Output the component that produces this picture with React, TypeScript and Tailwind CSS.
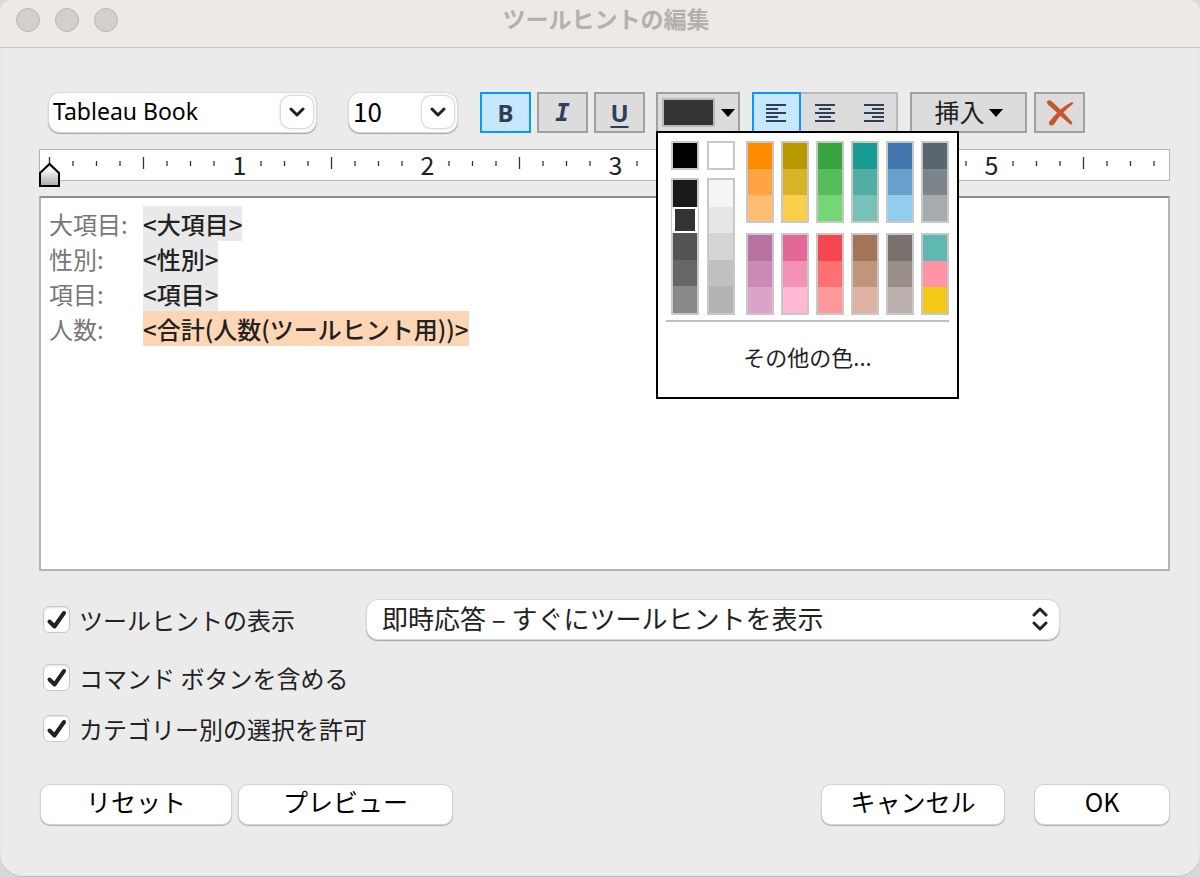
// Tooltip editor dialog: formatting toolbar, ruler, rich text area and options.

import { useState, type ReactNode } from "react";

type Align = "left" | "center" | "right";

const FONT = "font-['Noto_Sans_CJK_JP',sans-serif]";
const PUSH_BUTTON =
  "h-[41px] rounded-[10px] border border-[#d2d2d2] bg-white pb-2 text-[25px] leading-8 text-black shadow-[0_1px_1px_rgba(0,0,0,0.25)]";
const TOOL_BUTTON = "flex h-[41px] items-center justify-center border-2";
const TOOL_OFF = "border-[#a0a0a3] bg-[#dcdcdc]";
const TOOL_ON = "border-[#0a95ff] bg-[#c7e6ff]";

// Two neutral columns, then the hue ramps (two rows of six)
const DARKS = ["#1b191a", "#333333", "#545454", "#666666", "#898989"];
const LIGHTS = ["#f5f5f5", "#e6e6e6", "#d4d4d4", "#c0c0c0", "#b4b4b2"];
const HUES = [
  ["#ff8b00", "#ffa442", "#ffbe73"],
  ["#b89900", "#d7b328", "#f9cf4b"],
  ["#37a43f", "#56bd5b", "#75d675"],
  ["#1a9b94", "#52aea4", "#79c1b8"],
  ["#4276ae", "#68a1cb", "#92ccee"],
  ["#59666f", "#7c858c", "#a6abad"],
  ["#b973a3", "#cb8bb6", "#dba3ca"],
  ["#e26997", "#f492b5", "#ffb9d4"],
  ["#f4464f", "#ff7074", "#ff989b"],
  ["#a3735a", "#bf957c", "#dfb3a3"],
  ["#7a706e", "#9a8e89", "#bcb1ae"],
  ["#5fb9b2", "#ff94a5", "#f4c915"],
];

const FIELDS = [
  { label: "大項目:", value: "<大項目>" },
  { label: "性別:", value: "<性別>" },
  { label: "項目:", value: "<項目>" },
  { label: "人数:", value: "<合計(人数(ツールヒント用))>", measure: true },
];

function Swatches({ colors, selected, onPick }: { colors: string[]; selected: string; onPick: (c: string) => void }) {
  return (
    <div className="flex w-7 flex-col border-2 border-[#c8c8c8]">
      {colors.map((c) => (
        <button
          key={c}
          aria-label={c}
          onClick={() => onPick(c)}
          className={`min-h-[25px] flex-1 ${c === selected ? "relative shadow-[inset_0_0_0_2px_#fff,1px_0_#fff,-1px_0_#fff]" : ""}`}
          style={{ backgroundColor: c }}
        />
      ))}
    </div>
  );
}

function Combo({ label, options, className, textClass }: { label: string; options: string[]; className: string; textClass: string }) {
  return (
    <div className={`relative ${className}`}>
      <select
        aria-label={label}
        className={`h-[41px] w-full appearance-none rounded-[12px] border border-[#d8d8d8] bg-white pl-1 text-black shadow-[0_1px_1px_rgba(0,0,0,0.3)] ${textClass}`}
      >
        {options.map((o) => (
          <option key={o}>{o}</option>
        ))}
      </select>
      <span className="pointer-events-none absolute top-1 right-1 flex h-8 w-8 items-center justify-center rounded-[9px] bg-white shadow-[0_0_3px_rgba(0,0,0,0.4)]">
        <svg width="16" height="10" viewBox="0 0 16 10" fill="none" stroke="#222" strokeWidth="3" strokeLinecap="round" strokeLinejoin="round">
          <path d="M2 2l6 6 6-6" />
        </svg>
      </span>
    </div>
  );
}

function AlignIcon({ align }: { align: Align }) {
  const shift = { left: 0, center: 4, right: 8 }[align];
  return (
    <svg width="20" height="20" viewBox="0 0 20 20" stroke="#2e3f57" strokeWidth="2">
      {[2, 6, 10, 14, 18].map((y, i) =>
        i % 2 === 0 ? <path key={y} d={`M0 ${y}h20`} /> : <path key={y} d={`M${shift} ${y}h12`} />
      )}
    </svg>
  );
}

function Caret() {
  return (
    <svg width="14" height="8" viewBox="0 0 14 8">
      <path d="M0 0h14L7 8z" fill="#000" />
    </svg>
  );
}

function Ruler() {
  const ticks = Array.from({ length: 48 }, (_, i) => i);
  return (
    <div className="relative mt-4 h-8 border border-[#b4b4b4] bg-white">
      <svg width="100%" height="30" className="block overflow-visible">
        {ticks.map((i) => {
          const x = 9.5 + i * 23.5;
          if (i > 0 && i % 8 === 0) {
            return (
              <text key={i} x={x + 2} y="25" textAnchor="middle" fontSize="25" fill="#222">
                {i / 8}
              </text>
            );
          }
          const half = i % 4 === 0;
          return <path key={i} d={half ? `M${x} 7v12` : `M${x} 11v5`} stroke="#333" strokeWidth="1.3" />;
        })}
      </svg>
      <svg width="22" height="26" viewBox="0 0 22 26" className="absolute top-3 -left-px">
        <defs>
          <linearGradient id="marker" x1="0" y1="0" x2="0" y2="1">
            <stop offset="0.3" stopColor="#f4f4f4" />
            <stop offset="1" stopColor="#a8a8a8" />
          </linearGradient>
        </defs>
        <path d="M1 24V11L10.500 2 20 11v13z" fill="url(#marker)" stroke="#000" strokeWidth="2" />
      </svg>
    </div>
  );
}

function Check({ children }: { children: ReactNode }) {
  return (
    <label className="flex h-[27px] items-center gap-[9px] text-[24px] leading-[27px] whitespace-nowrap text-[#222]">
      <span className="relative block h-[27px] w-[27px]">
        <input
          type="checkbox"
          defaultChecked
          className="peer block h-full w-full appearance-none rounded-[6px] border border-[#c9c9c9] bg-white shadow-[inset_0_1px_2px_rgba(0,0,0,0.12)]"
        />
        <svg
          viewBox="0 0 27 27"
          className="pointer-events-none absolute inset-0 hidden peer-checked:block"
          fill="none"
          stroke="#222"
          strokeWidth="4"
          strokeLinecap="round"
          strokeLinejoin="round"
        >
          <path d="M6.500 15.500l5 5L21 7" />
        </svg>
      </span>
      {children}
    </label>
  );
}

export default function App() {
  const [bold, setBold] = useState(true);
  const [italic, setItalic] = useState(false);
  const [underline, setUnderline] = useState(false);
  const [align, setAlign] = useState<Align>("left");
  const [color, setColor] = useState("#333333");
  const [paletteOpen, setPaletteOpen] = useState(true);

  return (
    <div className="bg-[#d9d9d9]">
      <main className={`${FONT} overflow-hidden rounded-t-[12px] rounded-b-[22px] bg-[#ebebeb] text-[#222] shadow-[inset_0_-1px_1px_#bbb]`}>
        {/* Title bar */}
        <header className="relative flex h-12 items-start justify-center border-b border-[#c6c2bf] bg-[#eee9e4] pl-3">
          <div className="absolute top-2 left-4 flex gap-[15px]">
            {["閉じる", "しまう", "拡大"].map((name) => (
              <button key={name} aria-label={name} className="h-6 w-6 rounded-full border border-[#b9b5b2] bg-[#d4cfcb]" />
            ))}
          </div>
          <h1 className="text-[23px] leading-9 font-bold text-[#b4b0ad]">ツールヒントの編集</h1>
        </header>

        <div className="pt-11 pr-[30px] pb-[52px] pl-[39px]">
          {/* Toolbar */}
          <div className="flex pl-[9px]">
            <Combo label="フォント" options={["Tableau Book"]} className="w-[269px]" textClass="pb-0.5 text-[23px] font-['Noto_Sans',sans-serif]" />
            <Combo label="サイズ" options={["10"]} className="ml-[31px] w-[110px]" textClass="pb-1 text-[26px] leading-[30px]" />

            <div className="ml-[22px] flex gap-1.5 text-[#2e3f57]">
              <button aria-label="太字" aria-pressed={bold} onClick={() => setBold(!bold)} className={`${TOOL_BUTTON} w-[51px] ${bold ? TOOL_ON : TOOL_OFF}`}>
                <span className="font-['Noto_Sans',sans-serif] text-[24px] leading-8 font-bold">B</span>
              </button>
              <button aria-label="斜体" aria-pressed={italic} onClick={() => setItalic(!italic)} className={`${TOOL_BUTTON} w-[51px] ${italic ? TOOL_ON : TOOL_OFF}`}>
                <span className="font-['DejaVu_Sans_Mono',monospace] text-[24px] leading-8 font-bold italic">I</span>
              </button>
              <button aria-label="下線" aria-pressed={underline} onClick={() => setUnderline(!underline)} className={`${TOOL_BUTTON} w-[51px] ${underline ? TOOL_ON : TOOL_OFF}`}>
                <span className="font-['Noto_Sans',sans-serif] text-[24px] leading-8 font-bold underline decoration-2 underline-offset-4">U</span>
              </button>
            </div>

            {/* Text colour and its palette */}
            <div className="relative ml-[11px]">
              <button aria-label="色" aria-expanded={paletteOpen} onClick={() => setPaletteOpen(!paletteOpen)} className={`${TOOL_BUTTON} w-[84px] gap-1.5 ${TOOL_OFF}`}>
                <span className="h-[29px] w-[53px] border-2 border-[#b9b9b9]" style={{ backgroundColor: color }} />
                <Caret />
              </button>
              {paletteOpen && (
                <div className="absolute top-[39px] left-0 z-10 h-[268px] w-[303px] border-2 border-black bg-white px-2 pt-2">
                  <div className="flex gap-[11px] pl-[5px]">
                    <div className="flex gap-2">
                      <div className="flex flex-col gap-2">
                        <Swatches colors={["#000000"]} selected={color} onPick={setColor} />
                        <div className="flex h-[137px]">
                          <Swatches colors={DARKS} selected={color} onPick={setColor} />
                        </div>
                      </div>
                      <div className="flex flex-col gap-2">
                        <Swatches colors={["#ffffff"]} selected={color} onPick={setColor} />
                        <div className="flex h-[137px]">
                          <Swatches colors={LIGHTS} selected={color} onPick={setColor} />
                        </div>
                      </div>
                    </div>
                    <div className="grid auto-rows-[82px] grid-cols-[repeat(6,28px)] gap-x-[7px] gap-y-2.5">
                      {HUES.map((ramp) => (
                        <Swatches key={ramp[0]} colors={ramp} selected={color} onPick={setColor} />
                      ))}
                    </div>
                  </div>
                  <hr className="mt-[5px] border-t-2 border-[#c0c0c0]" />
                  <button className="mt-3 block h-11 w-full text-center text-[22px] leading-[44px]">その他の色...</button>
                </div>
              )}
            </div>

            <div className="ml-3 grid h-[41px] w-[146px] grid-cols-3 bg-[#dcdcdc] shadow-[inset_0_0_0_2px_#b9b9bb]">
              {(["left", "center", "right"] as const).map((a) => (
                <button
                  key={a}
                  aria-label={a}
                  aria-pressed={align === a}
                  onClick={() => setAlign(a)}
                  className={`flex items-center justify-center ${align === a ? `border-2 ${TOOL_ON}` : ""}`}
                >
                  <AlignIcon align={a} />
                </button>
              ))}
            </div>

            <button className={`${TOOL_BUTTON} ml-3 w-[117px] gap-1 text-[25px] leading-8 ${TOOL_OFF}`}>
              <span className="pb-1">挿入</span>
              <Caret />
            </button>
            <button aria-label="クリア" className={`${TOOL_BUTTON} ml-[7px] w-[51px] ${TOOL_OFF}`}>
              <svg width="28" height="28" viewBox="0 0 28 28" fill="#c9562a">
                <path d="M1 3.500C1 1 4 .500 6.500 3 13 9 19 15 26.500 23.500L25 26C18 20 12 15 7 10 4 7 1 6 1 3.500z" />
                <path d="M26 3l1.500 1.500C20 10 13 17 8 25.500c-2 2-6 1-5-2.500C9 15.500 17 7 26 3z" />
              </svg>
            </button>
          </div>

          <Ruler />

          {/* Tooltip body */}
          <div
            role="textbox"
            aria-multiline="true"
            aria-label="ツールヒント"
            contentEditable
            suppressContentEditableWarning
            className="mt-[15px] h-[375px] border-2 border-[#b5b5b5] border-t-[#8e8e8e] bg-white px-2 pt-2 text-[24px] leading-[35px]"
          >
            {FIELDS.map((f) => (
              <div key={f.label} className="flex h-[35px] text-[#777]">
                <span className="w-[94px]">{f.label}</span>
                <span className={`font-medium text-[#222] ${f.measure ? "bg-[#ffd6b5]" : "bg-[#e9e9e9]"}`}>{f.value}</span>
              </div>
            ))}
          </div>

          {/* Options */}
          <div className="mt-7 flex flex-col gap-6 pl-1">
            <div className="flex items-center">
              <div className="w-[323px]">
                <Check>ツールヒントの表示</Check>
              </div>
              <div className="relative mr-[110px] flex-1">
                <select
                  aria-label="応答"
                  className="block h-[41px] w-full appearance-none rounded-[12px] border border-[#d8d8d8] bg-white pb-1 pl-[15px] text-[26px] leading-[30px] text-[#222] shadow-[0_1px_1px_rgba(0,0,0,0.3)]"
                >
                  <option>即時応答 – すぐにツールヒントを表示</option>
                </select>
                <svg
                  width="16"
                  height="24"
                  viewBox="0 0 16 24"
                  className="pointer-events-none absolute top-2 right-3"
                  fill="none"
                  stroke="#222"
                  strokeWidth="3"
                  strokeLinecap="round"
                  strokeLinejoin="round"
                >
                  <path d="M2 8l6-6 6 6M2 16l6 6 6-6" />
                </svg>
              </div>
            </div>
            <Check>コマンド ボタンを含める</Check>
            <Check>カテゴリー別の選択を許可</Check>
          </div>

          {/* Actions */}
          <footer className="mt-[42px] flex">
            <button className={`${PUSH_BUTTON} ml-px w-[192px]`}>リセット</button>
            <button className={`${PUSH_BUTTON} ml-1.5 w-[215px]`}>プレビュー</button>
            <button className={`${PUSH_BUTTON} ml-auto w-[184px]`}>キャンセル</button>
            <button className={`${PUSH_BUTTON} ml-[29px] w-[136px]`}>OK</button>
          </footer>
        </div>
      </main>
    </div>
  );
}
